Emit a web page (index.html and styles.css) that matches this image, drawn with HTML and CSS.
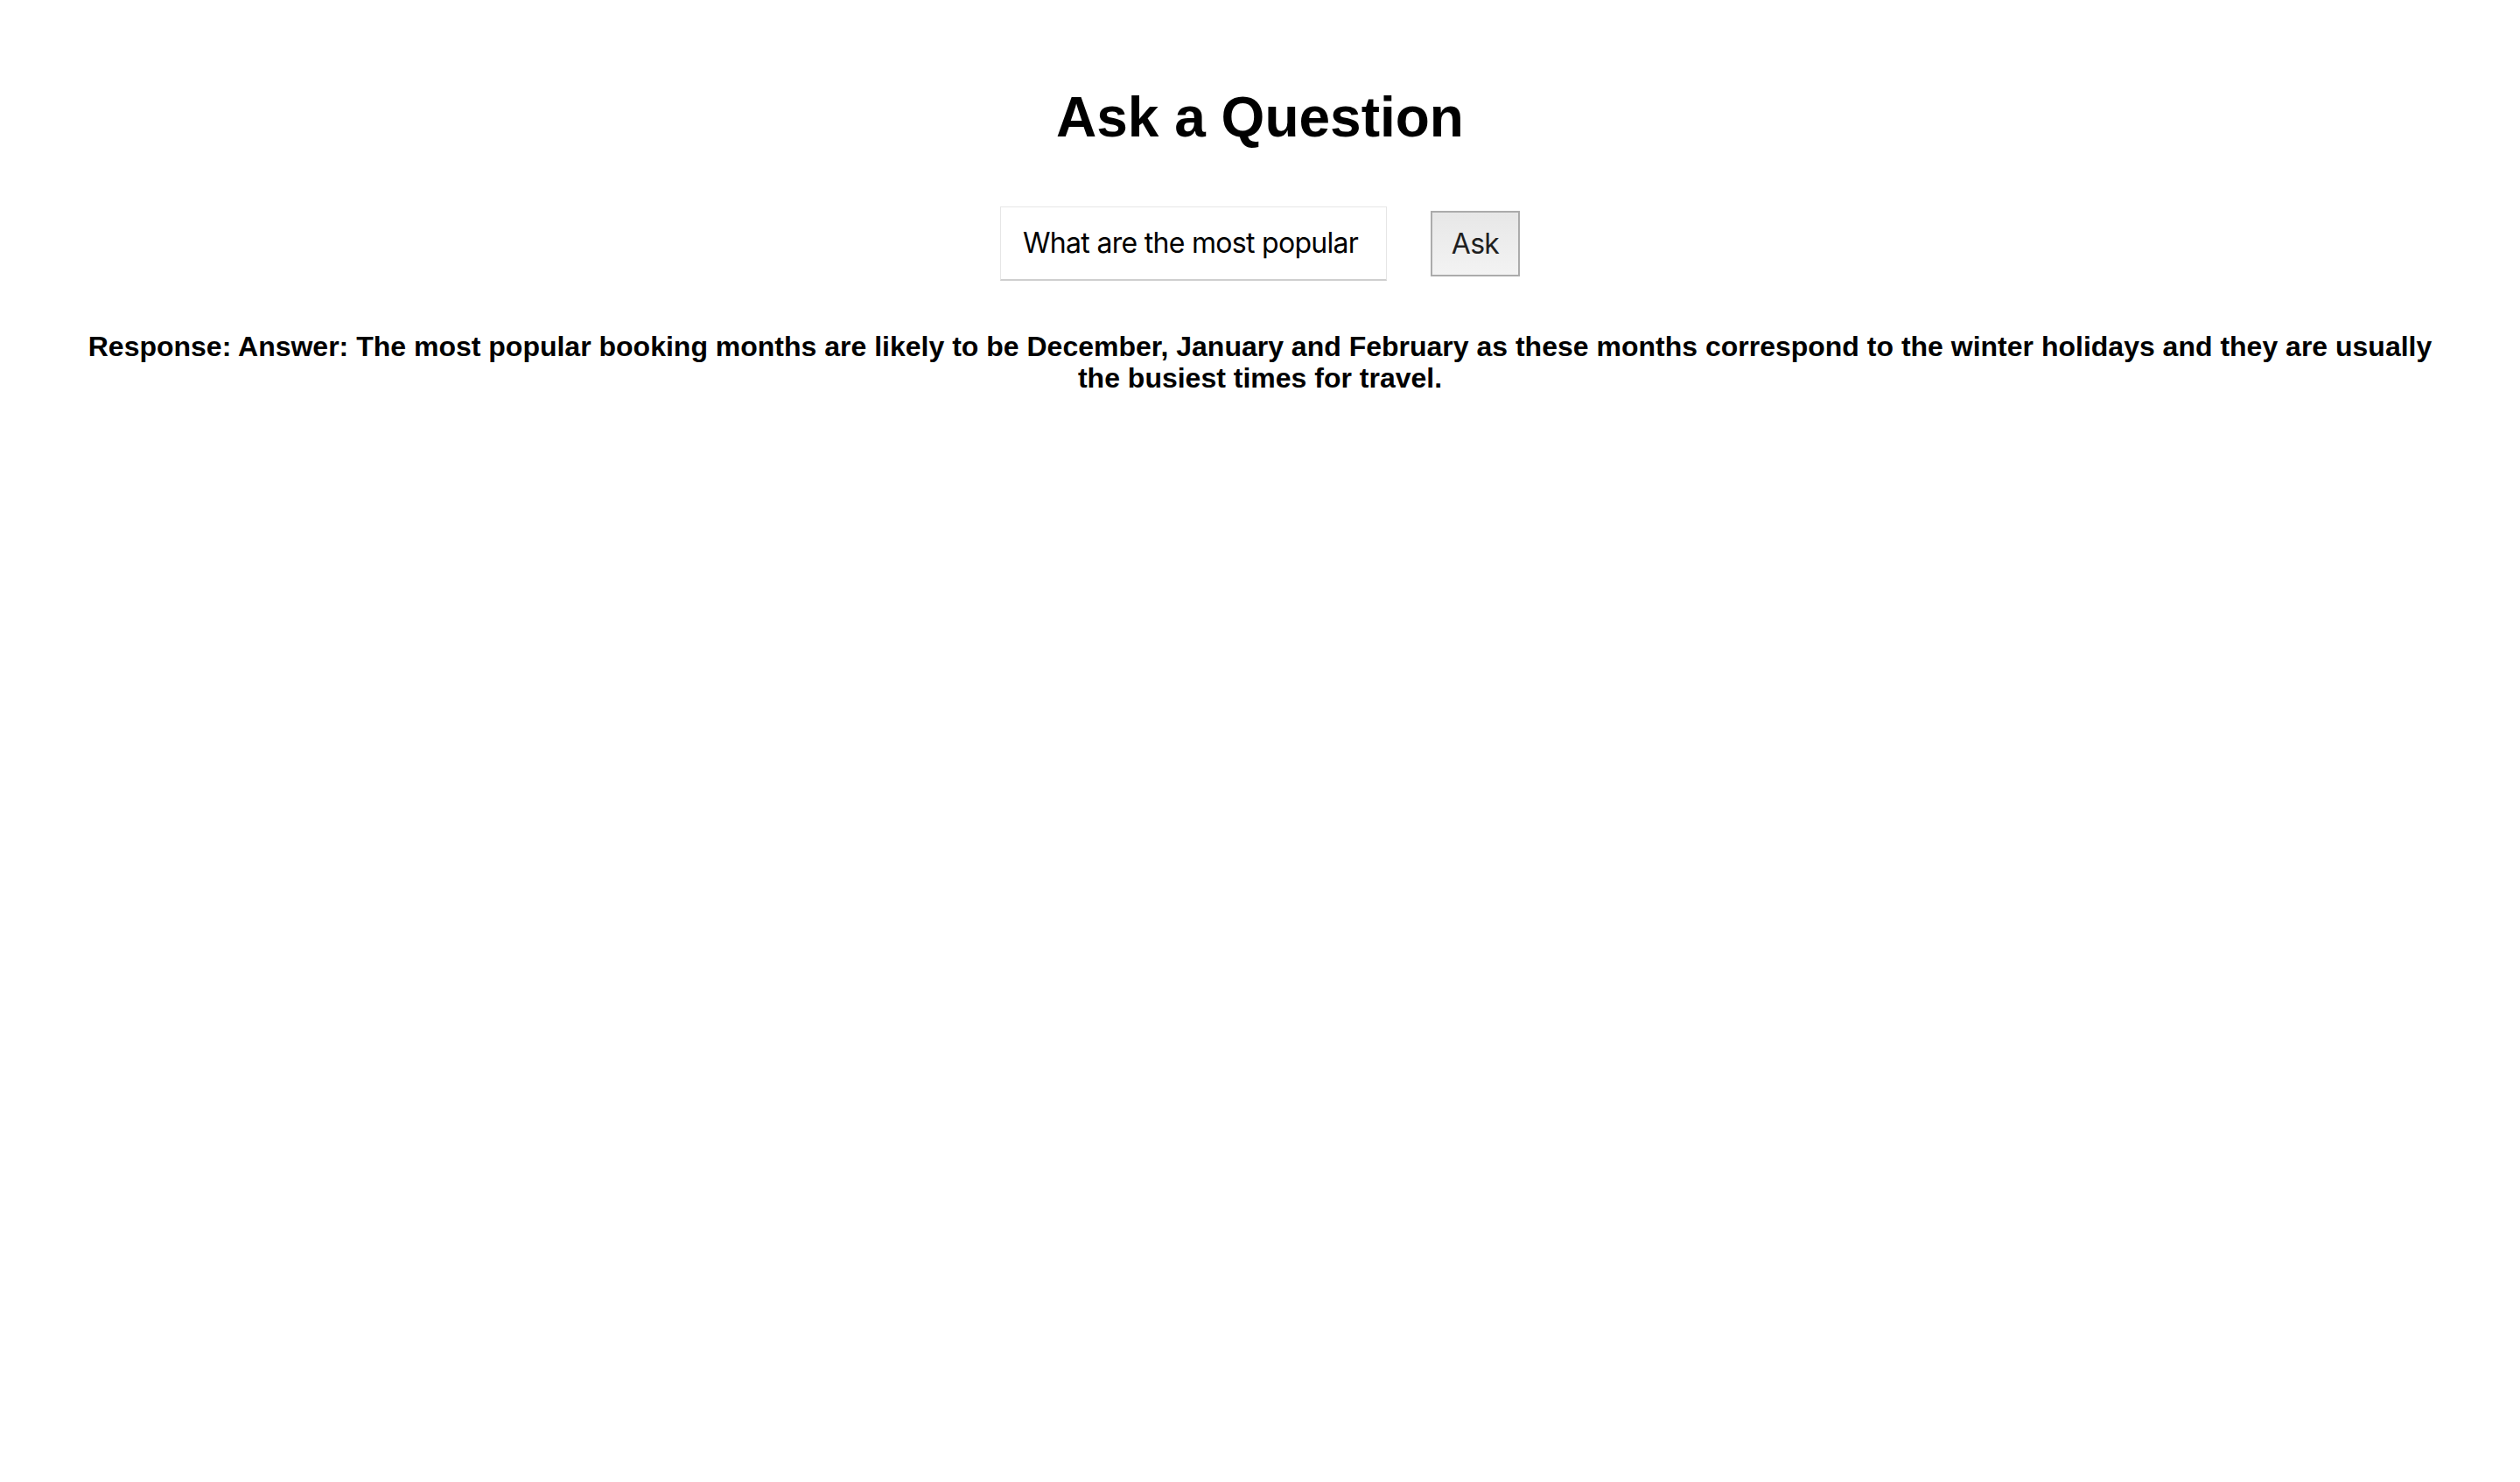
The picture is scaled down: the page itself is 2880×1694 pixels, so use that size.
FILE: index.html
```html
<!DOCTYPE html>
<html lang="en">
<head>
<meta charset="utf-8">
<title>Ask a Question</title>
<link rel="stylesheet" href="styles.css">
</head>
<body>
<main class="app">
  <h1 class="title">Ask a Question</h1>
  <form class="ask-form">
    <input class="question" type="text" value="What are the most popular booking months?">
    <button class="ask-btn" type="button">Ask</button>
  </form>
  <p class="response">Response: Answer: The most popular booking months are likely to be December, January and February as these months correspond to the winter holidays and they are usually the busiest times for travel.</p>
</main>
</body>
</html>
```
FILE: styles.css
```css
html, body {
  margin: 0;
  padding: 0;
  background: #ffffff;
}

.app {
  padding: 98px 90px 0;
  text-align: center;
  font-family: "Liberation Sans", Arial, Helvetica, sans-serif;
  color: #000000;
}

.title {
  margin: 0;
  font-size: 64px;
  line-height: 1.15;
  font-weight: bold;
}

.ask-form {
  display: flex;
  justify-content: center;
  align-items: center;
  gap: 50px;
  margin-top: 64px;
}

.question {
  box-sizing: border-box;
  width: 442px;
  height: 85px;
  padding: 0 30px 0 25px;
  border: 1px solid #e6e6e6;
  border-bottom: 2px solid #cfcfcf;
  outline: none;
  font-family: Inter, "Noto Sans", sans-serif;
  font-size: 32px;
  letter-spacing: -0.7px;
  color: #000000;
  background: #ffffff;
}

.ask-btn {
  box-sizing: border-box;
  width: 102px;
  height: 75px;
  padding: 0;
  border: 2px solid #ababab;
  border-radius: 0;
  background: linear-gradient(#e7e7e7, #f3f3f3);
  font-family: Inter, "Noto Sans", sans-serif;
  font-size: 32px;
  letter-spacing: -0.7px;
  color: #1f1f1f;
}

.response {
  margin: 57px 0 0;
  font-size: 32px;
  line-height: 1.15;
  font-weight: bold;
}
```
